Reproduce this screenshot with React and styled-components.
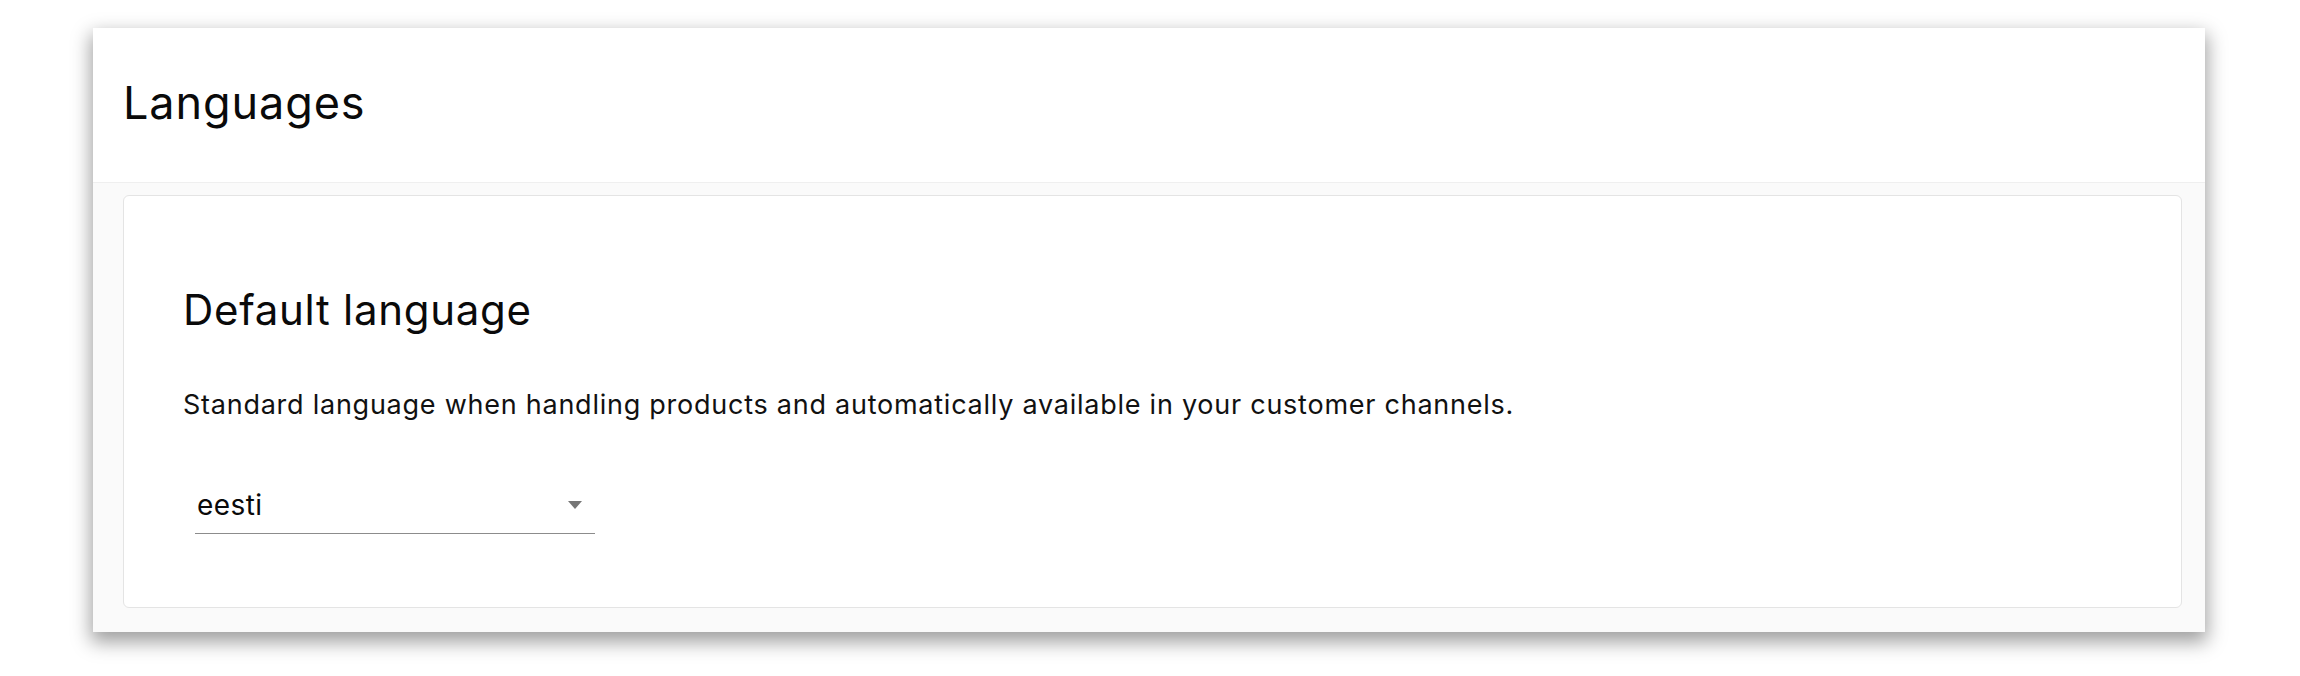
import React from "react";
import styled, { createGlobalStyle } from "styled-components";

const GlobalStyle = createGlobalStyle`
  body {
    margin: 0;
    background: #ffffff;
    font-family: Inter, "Noto Sans", sans-serif;
    color: #111111;
  }
`;

const Page = styled.div`
  padding: 28px 0 44px;
`;

const Panel = styled.section`
  width: 2112px;
  margin: 0 auto 0 93px;
  background: #fafafa;
  box-shadow: 0 8px 18px 2px rgba(0, 0, 0, 0.38);
`;

const Header = styled.header`
  background: #ffffff;
  border-bottom: 1px solid #efefef;
  padding: 47px 30px 52px;
`;

const Title = styled.h1`
  margin: 0;
  font-size: 45px;
  font-weight: 400;
  line-height: 55px;
  letter-spacing: 0.9px;
  color: #0a0a0a;
`;

const Body = styled.div`
  padding: 12px 23px 24px 30px;
`;

const Card = styled.div`
  background: #ffffff;
  border: 1px solid #e4e4e4;
  border-radius: 6px;
  padding: 89px 60px 73px 59px;
`;

const CardTitle = styled.h2`
  margin: 0;
  font-size: 42px;
  font-weight: 400;
  line-height: 50px;
  letter-spacing: 0.7px;
  color: #0a0a0a;
`;

const Description = styled.p`
  margin: 53px 0 0;
  font-size: 27px;
  line-height: 33px;
  letter-spacing: 0.75px;
  color: #111111;
`;

const Select = styled.div`
  display: flex;
  align-items: center;
  justify-content: space-between;
  width: 398px;
  margin: 67px 0 0 12px;
  padding: 0 0 11px 2px;
  border-bottom: 1px solid #8c8c8c;
  cursor: pointer;
`;

const SelectValue = styled.span`
  font-size: 28px;
  line-height: 34px;
  letter-spacing: 0.4px;
  color: #0a0a0a;
`;

const Arrow = styled.span`
  width: 0;
  height: 0;
  margin-right: 13px;
  border-left: 7px solid transparent;
  border-right: 7px solid transparent;
  border-top: 8px solid #767676;
`;

const App = () => {
  return (
    <>
      <GlobalStyle />
      <Page>
        <Panel>
          <Header>
            <Title>Languages</Title>
          </Header>
          <Body>
            <Card>
              <CardTitle>Default language</CardTitle>
              <Description>
                Standard language when handling products and automatically
                available in your customer channels.
              </Description>
              <Select>
                <SelectValue>eesti</SelectValue>
                <Arrow />
              </Select>
            </Card>
          </Body>
        </Panel>
      </Page>
    </>
  );
};

export default App;
